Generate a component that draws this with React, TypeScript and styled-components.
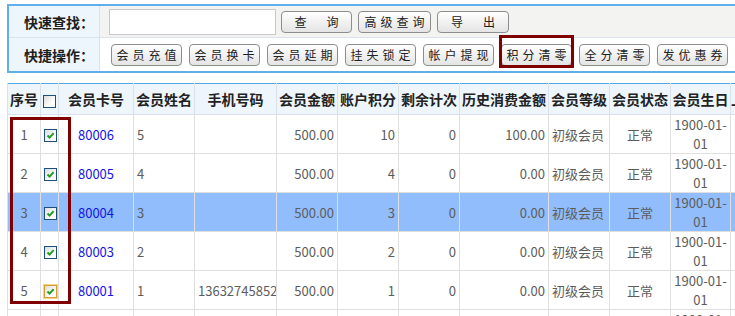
import styled, { createGlobalStyle } from 'styled-components';

type Member = {
  card: string;
  name: string;
  phone: string;
  money: string;
  points: string;
  times: string;
  spent: string;
};

const members: Member[] = [
  { card: '80006', name: '5', phone: '', money: '500.00', points: '10', times: '0', spent: '100.00' },
  { card: '80005', name: '4', phone: '', money: '500.00', points: '4', times: '0', spent: '0.00' },
  { card: '80004', name: '3', phone: '', money: '500.00', points: '3', times: '0', spent: '0.00' },
  { card: '80003', name: '2', phone: '', money: '500.00', points: '2', times: '0', spent: '0.00' },
  { card: '80001', name: '1', phone: '13632745852', money: '500.00', points: '1', times: '0', spent: '0.00' },
  { card: '80002', name: '0', phone: '', money: '500.00', points: '0', times: '0', spent: '0.00' },
];

const quickOps = ['会员充值', '会员换卡', '会员延期', '挂失锁定', '帐户提现', '积分清零', '全分清零', '发优惠券'];

const colWidths = [33, 18, 75, 61, 82, 61, 61, 61, 89, 61, 61, 60, 100];

const CheckMark = () => (
  <svg width="11" height="11" viewBox="0 0 11 11">
    <path d="M2.5 5.5 L4.6 7.6 L8.6 3.2" fill="none" stroke="#1f9e1f" strokeWidth="2" />
  </svg>
);

const App = () => {
  return (
    <>
      <GlobalStyle />
      <Page>
        <Panel>
          <Label>快速查找：</Label>
          <SearchRow>
            <SearchInput />
            <Btn $w={71}>查　询</Btn>
            <Btn $w={73}>高级查询</Btn>
            <Btn $w={72}>导　出</Btn>
          </SearchRow>
          <Label $last>快捷操作：</Label>
          <OpsRow>
            {quickOps.map((op) => (
              <Btn key={op} $w={71} $marked={op === '积分清零'}>
                {op}
              </Btn>
            ))}
          </OpsRow>
        </Panel>

        <TableArea>
          <Grid>
            <colgroup>
              {colWidths.map((w, i) => (
                <col key={i} style={{ width: w }} />
              ))}
            </colgroup>
            <thead>
              <tr>
                <Th>序号</Th>
                <Th>
                  <Check />
                </Th>
                <Th>会员卡号</Th>
                <Th>会员姓名</Th>
                <Th>手机号码</Th>
                <Th>会员金额</Th>
                <Th>账户积分</Th>
                <Th>剩余计次</Th>
                <Th>历史消费金额</Th>
                <Th>会员等级</Th>
                <Th>会员状态</Th>
                <Th>会员生日</Th>
                <Th $left>上次消费时间</Th>
              </tr>
            </thead>
            <tbody>
              {members.map((m, index) => (
                <Row key={m.card} $active={index === 2}>
                  <Td $align="center">{index + 1}</Td>
                  <Td $align="center">
                    <Check $checked $hover={index === 4}>
                      <CheckMark />
                    </Check>
                  </Td>
                  <Td $align="center">
                    <CardLink>{m.card}</CardLink>
                  </Td>
                  <Td>{m.name}</Td>
                  <Td>{m.phone}</Td>
                  <Td $align="right">{m.money}</Td>
                  <Td $align="right">{m.points}</Td>
                  <Td $align="right">{m.times}</Td>
                  <Td $align="right">{m.spent}</Td>
                  <Td>初级会员</Td>
                  <Td $align="center">正常</Td>
                  <Td $align="center" $wrap>1900-01-01</Td>
                  <Td></Td>
                </Row>
              ))}
            </tbody>
          </Grid>
          <RowsMark />
        </TableArea>
      </Page>
    </>
  );
};

const GlobalStyle = createGlobalStyle`
  html, body {
    margin: 0;
    padding: 0;
    overflow: hidden;
    background: #ffffff;
  }
  body {
    font-family: "Noto Sans CJK SC", "Liberation Sans", sans-serif;
    color: #555;
  }
`;

const Page = styled.div`
  width: 900px;
  padding: 4px 0 0 7px;
`;

const Panel = styled.div`
  display: grid;
  grid-template-columns: 91px 1fr;
  grid-template-rows: 32px 33px;
  border-top: 2px solid #5eafea;
  border-bottom: 2px solid #5eafea;
  border-left: 2px solid #5eafea;
`;

const Label = styled.div<{ $last?: boolean }>`
  display: flex;
  align-items: center;
  justify-content: flex-end;
  padding-right: 5px;
  background: #eef6fd;
  border-right: 1px solid #d8e3ec;
  border-bottom: ${(p) => (p.$last ? 'none' : '1px solid #d8e3ec')};
  font-size: 14px;
  font-weight: bold;
  color: #1e1e1e;
`;

const SearchRow = styled.div`
  display: flex;
  align-items: center;
  gap: 6px;
  padding-left: 9px;
  background: #f3f3f1;
  border-bottom: 1px solid #d8e3ec;
`;

const OpsRow = styled.div`
  display: flex;
  align-items: center;
  gap: 7px;
  padding-left: 11px;
  padding-top: 1px;
  background: #ffffff;
`;

const SearchInput = styled.input`
  width: 167px;
  height: 26px;
  box-sizing: border-box;
  border: 1px solid #c9c9c9;
  background: #fff;
  margin-right: -1px;
  outline: none;
`;

const Btn = styled.button<{ $w: number; $marked?: boolean }>`
  position: relative;
  box-sizing: border-box;
  width: ${(p) => p.$w}px;
  height: 22px;
  padding: 0 0 0 4px;
  border: 1px solid #8d8d8d;
  border-radius: 4px;
  background: linear-gradient(#ffffff, #e4e4e4);
  font-family: "Noto Sans CJK SC", sans-serif;
  font-size: 12px;
  letter-spacing: 4px;
  line-height: 20px;
  color: #222;
  white-space: nowrap;
  cursor: pointer;

  &::after {
    content: '';
    display: ${(p) => (p.$marked ? 'block' : 'none')};
    position: absolute;
    top: -10px;
    left: -3px;
    right: -3px;
    bottom: -3px;
    border: 3px solid #800000;
    pointer-events: none;
  }
`;

const TableArea = styled.div`
  position: relative;
  margin-top: 10px;
`;

const Grid = styled.table`
  border-collapse: collapse;
  table-layout: fixed;
  width: 784px;
  border-top: 1px solid #4fa6e8;
`;

const Th = styled.th<{ $left?: boolean }>`
  height: 30px;
  padding: 0;
  background: #eef6fc;
  border: 1px solid #d9e2ea;
  border-top: none;
  font-size: 14px;
  font-weight: bold;
  color: #222;
  text-align: ${(p) => (p.$left ? 'left' : 'center')};
  white-space: nowrap;
  overflow: hidden;
`;

const Row = styled.tr<{ $active?: boolean }>`
  height: 39px;
  background: ${(p) => (p.$active ? '#91bdfd' : '#ffffff')};
`;

const Td = styled.td<{ $align?: string; $wrap?: boolean }>`
  padding: 0 3px;
  border: 1px solid #dfdfdf;
  text-align: ${(p) => p.$align || 'left'};
  font-size: 13px;
  line-height: 19px;
  white-space: ${(p) => (p.$wrap ? 'normal' : 'nowrap')};
  color: #5c5c5c;
  overflow: hidden;
`;

const CardLink = styled.a`
  color: #1414e8;
  text-decoration: none;
  cursor: pointer;
`;

const Check = styled.span<{ $checked?: boolean; $hover?: boolean }>`
  display: inline-flex;
  align-items: center;
  justify-content: center;
  box-sizing: border-box;
  width: 13px;
  height: 13px;
  vertical-align: middle;
  border: 1px solid ${(p) => (p.$hover ? '#d79d2f' : '#1d4f7c')};
  box-shadow: ${(p) => (p.$hover ? '0 0 0 1px #f4d48c' : 'none')};
  background: linear-gradient(135deg, #dcdcdc, #ffffff 70%);
`;

const RowsMark = styled.div`
  position: absolute;
  left: 3px;
  top: 34px;
  width: 61px;
  height: 187px;
  box-sizing: border-box;
  border: 3px solid #800000;
  pointer-events: none;
`;

export default App;
